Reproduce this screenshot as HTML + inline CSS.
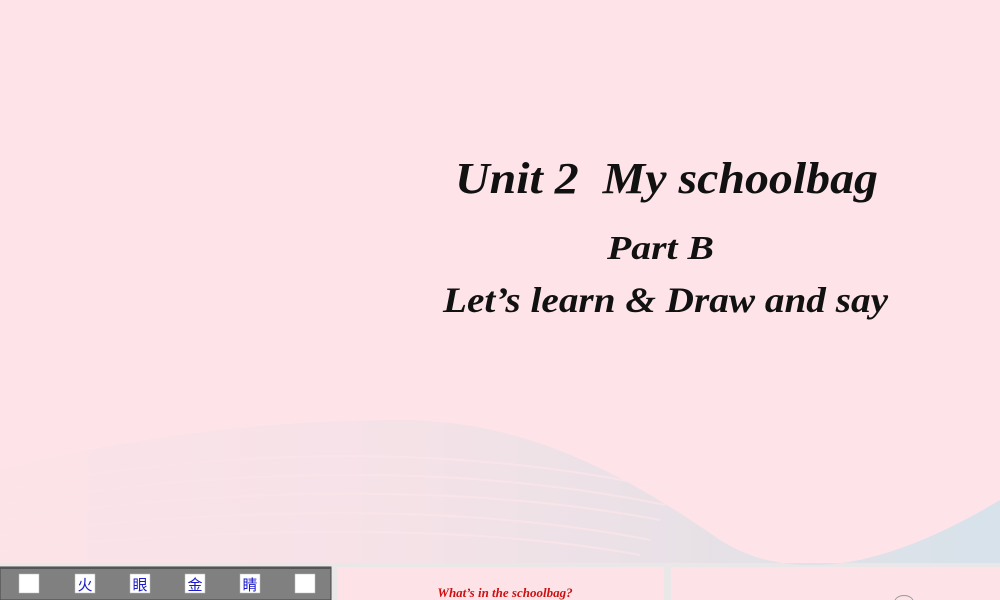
<!DOCTYPE html>
<html><head><meta charset="utf-8"><style>
html,body{margin:0;padding:0;width:1000px;height:600px;overflow:hidden;background:#e9e7e8}
</style></head><body>
<svg width="1000" height="600" xmlns="http://www.w3.org/2000/svg" style="position:absolute;left:0;top:0">
<defs>
<linearGradient id="w" x1="0" y1="0" x2="1" y2="0">
<stop offset="0" stop-color="#fce3e8"/><stop offset="0.4" stop-color="#f3e2e7"/><stop offset="0.7" stop-color="#e3e0e6"/><stop offset="1" stop-color="#d0e2ea"/></linearGradient>
</defs>
<rect x="0" y="0" width="1000" height="563" fill="#fee4e9"/>
<path d="M0 470 C150 430 300 420 400 420 C520 420 620 470 720 540 C800 590 900 560 1000 500 L1000 563 L0 563Z" fill="url(#w)" opacity="0.85"/>
<g stroke="#fbe5ea" stroke-width="2" fill="none" opacity="0.8">
<path d="M0 490 C200 450 450 440 670 490"/>
<path d="M0 505 C200 470 450 460 665 505"/>
<path d="M0 520 C200 490 450 480 660 520"/>
<path d="M0 535 C200 510 450 500 650 540"/>
<path d="M0 550 C200 530 450 520 640 555"/>
</g>
<g font-family="Liberation Serif, serif" font-style="italic" font-weight="bold" fill="#111" text-anchor="start">
<text x="455" y="193" font-size="44" textLength="423" lengthAdjust="spacingAndGlyphs">Unit 2&#160;&#160;My schoolbag</text>
<text x="607" y="259" font-size="34" textLength="107" lengthAdjust="spacingAndGlyphs">Part B</text>
<text x="443" y="312" font-size="36" textLength="445" lengthAdjust="spacingAndGlyphs">Let’s learn &amp; Draw and say</text>
</g>
<rect x="0" y="567" width="331" height="33" fill="#808080" stroke="#444" stroke-width="1"/>
<rect x="0" y="567" width="331" height="2" fill="#555"/>
<g fill="#fff" stroke="#bbb" stroke-width="0.5">
<rect x="19" y="574" width="20" height="19"/>
<rect x="75" y="574" width="20" height="19"/>
<rect x="130" y="574" width="20" height="19"/>
<rect x="185" y="574" width="20" height="19"/>
<rect x="240" y="574" width="20" height="19"/>
<rect x="295" y="574" width="20" height="19"/>
</g>
<g font-family="Liberation Sans, 'Noto Sans CJK SC', sans-serif" font-size="15" fill="#1a1ac8" text-anchor="middle">
<text x="85" y="590">火</text><text x="140" y="590">眼</text><text x="195" y="590">金</text><text x="250" y="590">睛</text>
</g>
<rect x="337" y="567" width="327" height="33" fill="#fde3e8"/>
<rect x="671" y="567" width="329" height="33" fill="#fde3e8"/>
<text x="505" y="597" font-family="Liberation Serif, serif" font-style="italic" font-weight="bold" font-size="13" fill="#cc1010" text-anchor="middle">What’s in the schoolbag?</text>
<path d="M895 600 A10 8 0 0 1 913 600" stroke="#999" fill="none"/>
</svg>
</body></html>
